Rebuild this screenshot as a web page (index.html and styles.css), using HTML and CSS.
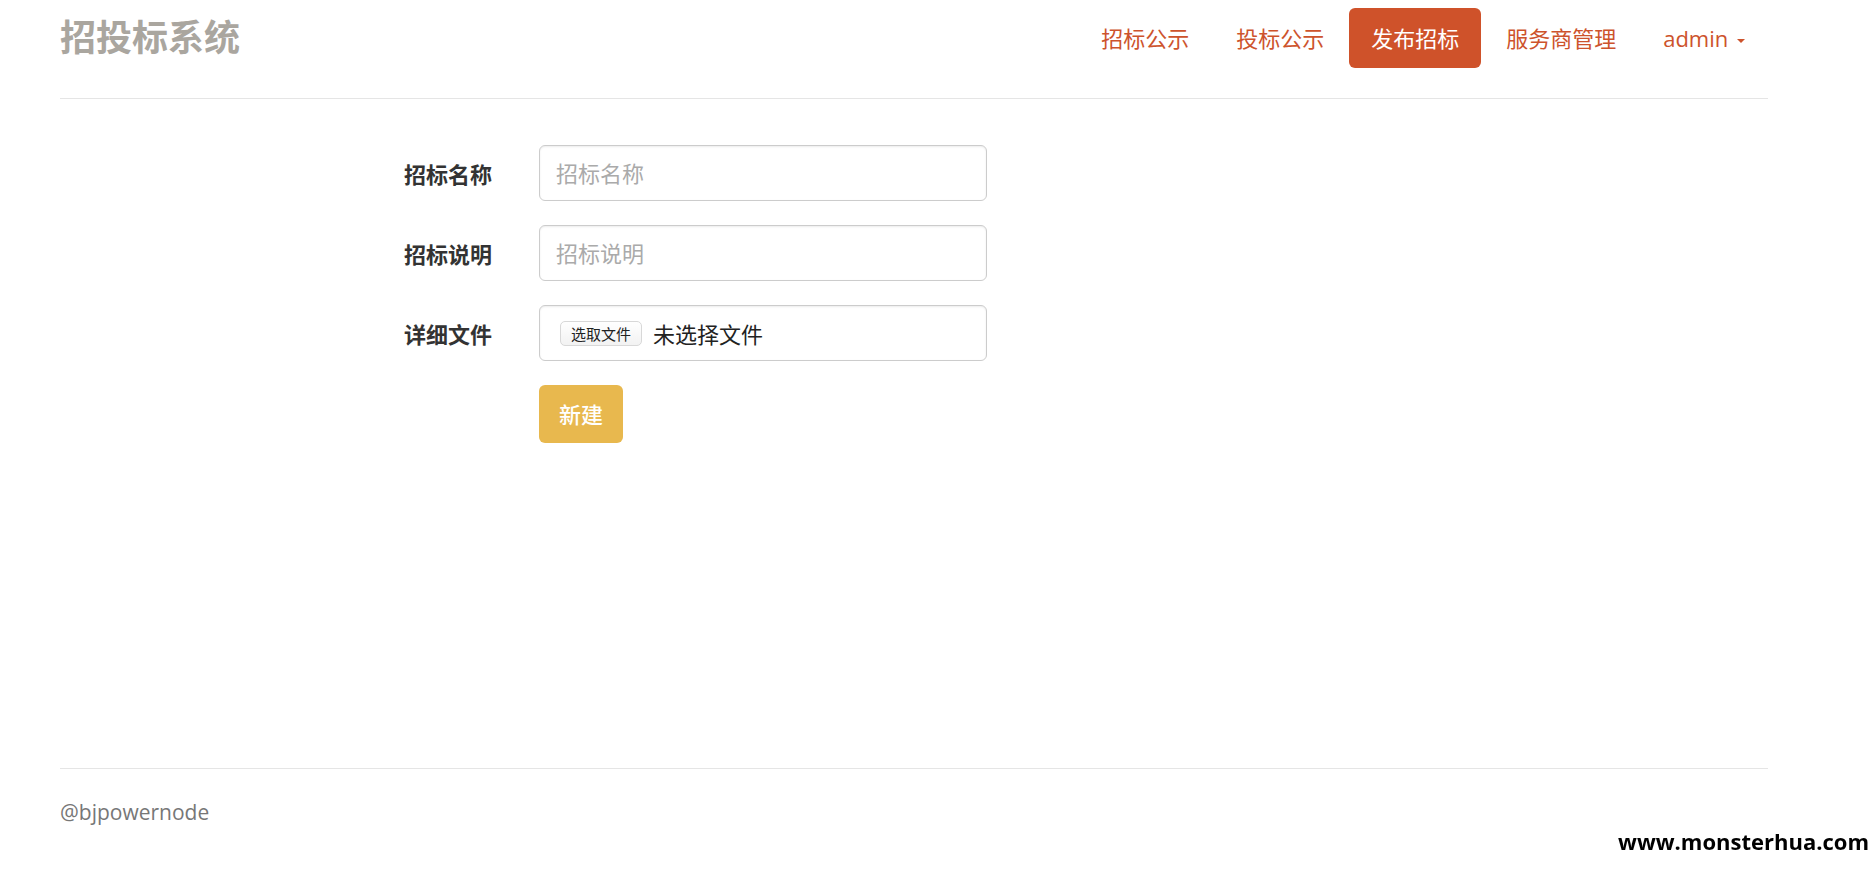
FILE: index.html
```html
<!DOCTYPE html>
<html lang="zh-CN">
<head>
    <meta charset="UTF-8">
    <meta name="viewport" content="width=device-width, initial-scale=1.0">
    <title>招投标系统</title>
    <link rel="stylesheet" href="styles.css">
</head>
<body>

    <div class="container">
        <div class="header">
            <h3 class="brand">招投标系统</h3>
            <ul class="nav">
                <li><a href="#">招标公示</a></li>
                <li><a href="#">投标公示</a></li>
                <li class="active"><a href="#">发布招标</a></li>
                <li><a href="#">服务商管理</a></li>
                <li><a href="#">admin <span class="caret"></span></a></li>
            </ul>
        </div>

        <form class="form">
            <div class="form-row">
                <label for="name">招标名称</label>
                <input type="text" id="name" class="form-control" placeholder="招标名称">
            </div>
            <div class="form-row">
                <label for="desc">招标说明</label>
                <input type="text" id="desc" class="form-control" placeholder="招标说明">
            </div>
            <div class="form-row">
                <label for="file">详细文件</label>
                <label class="form-control file-control">
                    <input type="file" id="file" class="file-input">
                    <span class="file-btn">选取文件</span>
                    <span class="file-name">未选择文件</span>
                </label>
            </div>
            <div class="form-actions">
                <button type="button" class="btn-warning">新建</button>
            </div>
        </form>

        <div class="footer">
            <p>@bjpowernode</p>
        </div>
    </div>

    <div class="watermark">www.monsterhua.com</div>

</body>
</html>
```

FILE: styles.css
```css
body {
    margin: 0;
    font-family: "Open Sans", "Noto Sans CJK SC", sans-serif;
    font-size: 22px;
    color: #333;
    background-color: #fff;
}

.container {
    width: 1708px;
    padding-left: 60px;
}

.header {
    display: flex;
    justify-content: space-between;
    align-items: center;
    padding-top: 8px;
    padding-bottom: 30px;
    border-bottom: 1px solid #e5e5e5;
}

.brand {
    margin: 0;
    font-size: 36px;
    line-height: 58px;
    font-weight: 700;
    color: #aaa69f;
}

.nav {
    list-style: none;
    margin: 0;
    padding: 0;
    display: flex;
    gap: 3px;
}

.nav a {
    display: block;
    padding: 0 22px;
    line-height: 60px;
    color: #cd532c;
    text-decoration: none;
    border-radius: 6px;
}

.nav li:last-child a {
    padding-right: 23px;
}

.nav .active a {
    background-color: #cf522a;
    color: #fff;
}

.caret {
    display: inline-block;
    width: 0;
    height: 0;
    margin-left: 3px;
    vertical-align: middle;
    border-top: 4px solid;
    border-left: 4px solid transparent;
    border-right: 4px solid transparent;
}

.form {
    padding-top: 46px;
}

.form-row {
    display: grid;
    grid-template-columns: 432px 448px;
    column-gap: 47px;
    align-items: center;
    margin-bottom: 24px;
}

.form-row > label {
    text-align: right;
    font-weight: 700;
}

.form-control {
    box-sizing: border-box;
    height: 56px;
    width: 100%;
    padding: 0 16px;
    font-family: inherit;
    font-size: 22px;
    color: #333;
    border: 1px solid #ccc;
    border-radius: 6px;
    box-shadow: inset 0 1px 2px rgba(0, 0, 0, 0.08);
}

.form-control::placeholder {
    color: #aaa;
}

.form-row > .file-control {
    display: flex;
    align-items: center;
    padding: 0 20px;
    font-weight: 400;
    text-align: left;
    cursor: pointer;
}

.file-input {
    display: none;
}

.file-btn {
    height: 25px;
    padding: 0 10px;
    font-size: 15px;
    line-height: 24px;
    color: #222;
    border: 1px solid #d8d8d8;
    border-radius: 5px;
    background: linear-gradient(#fff, #f2f2f2);
    box-sizing: border-box;
}

.file-name {
    margin-left: 11px;
    color: #222;
}

.form-actions {
    margin-left: 479px;
}

.btn-warning {
    height: 58px;
    padding: 0 20px 3px;
    font-family: inherit;
    font-size: 22px;
    font-weight: 500;
    color: #fff;
    background-color: #e8b84e;
    border: none;
    border-radius: 6px;
}

.footer {
    margin-top: 325px;
    padding-top: 28px;
    border-top: 1px solid #e5e5e5;
    color: #777;
    font-size: 21px;
    line-height: 31px;
}

.footer p {
    margin: 0;
}

.watermark {
    position: fixed;
    right: 5px;
    bottom: 20px;
    font-family: "Open Sans", sans-serif;
    font-weight: 700;
    font-size: 22px;
    line-height: 22px;
    color: #000;
}
```
